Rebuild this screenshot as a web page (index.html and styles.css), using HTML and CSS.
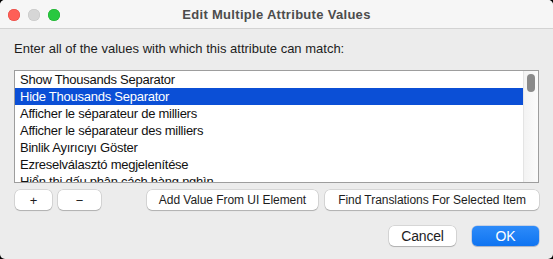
FILE: index.html
```html
<!DOCTYPE html>
<html>
<head>
<meta charset="utf-8">
<link rel="stylesheet" href="styles.css">
</head>
<body>
<div class="window">
  <div class="titlebar">
    <div class="lights">
      <span class="light red"></span>
      <span class="light gray"></span>
      <span class="light green"></span>
    </div>
    <div class="title">Edit Multiple Attribute Values</div>
    <div class="spacer"></div>
  </div>
  <div class="content">
    <div class="label">Enter all of the values with which this attribute can match:</div>
    <div class="listbox">
      <div class="rows">
        <div class="row">Show Thousands Separator</div>
        <div class="row selected">Hide Thousands Separator</div>
        <div class="row">Afficher le séparateur de milliers</div>
        <div class="row">Afficher le séparateur des milliers</div>
        <div class="row">Binlik Ayırıcıyı Göster</div>
        <div class="row">Ezreselválasztó megjelenítése</div>
        <div class="row">Hiển thị dấu phân cách hàng nghìn</div>
      </div>
      <div class="scrollbar"><div class="thumb"></div></div>
    </div>
    <div class="toolrow">
      <div class="group">
        <button class="btn plus">+</button>
        <button class="btn minus">−</button>
      </div>
      <div class="group wide">
        <button class="btn addval">Add Value From UI Element</button>
        <button class="btn findtr">Find Translations For Selected Item</button>
      </div>
    </div>
    <div class="actions">
      <button class="btn action">Cancel</button>
      <button class="btn action ok">OK</button>
    </div>
  </div>
</div>
</body>
</html>
```
FILE: styles.css
```css
* { box-sizing: border-box; }
html, body { margin: 0; padding: 0; background: #000; }
body { font-family: "Liberation Sans", Arial, sans-serif; font-size: 13px; color: #1d1d1d; }
.window {
  width: 553px; height: 259px;
  background: #ececec;
  border-radius: 5px;
  overflow: hidden;
}
.titlebar {
  height: 29px;
  background: #f6f6f6;
  border-bottom: 1px solid #d3d3d3;
  display: grid;
  grid-template-columns: 1fr auto 1fr;
  align-items: center;
}
.lights { display: flex; gap: 8px; padding-left: 8px; padding-top: 1px; }
.light { width: 12px; height: 12px; border-radius: 50%; display: block; }
.red { background: #fe5f57; box-shadow: inset 0 0 0 0.5px #e2463f; }
.gray { background: #d6d6d6; box-shadow: inset 0 0 0 0.5px #c4c4c4; }
.green { background: #28c840; box-shadow: inset 0 0 0 0.5px #1aab29; }
.title { font-weight: bold; color: #4c4c4c; letter-spacing: 0.3px; padding-top: 1px; }
.content { padding: 12px 14px 0 14px; }
.label { height: 16px; line-height: 16px; letter-spacing: 0; color: #1d1d1d; }
.listbox {
  margin-top: 13px;
  height: 113px;
  border: 1px solid #9d9d9d;
  background: #fff;
  display: flex;
}
.rows { flex: 1; overflow: hidden; }
.row {
  height: 17px; line-height: 17px;
  padding-left: 5px;
  letter-spacing: -0.25px;
  white-space: nowrap;
  color: #111;
}
.row.selected { background: #0b4fd6; color: #fff; }
.scrollbar {
  width: 15px;
  background: linear-gradient(to right, #f3f3f3, #fbfbfb);
  border-left: 1px solid #e4e4e4;
  padding: 3px 0 0 3px;
}
.thumb { width: 8px; height: 18px; border-radius: 4px; background: #8a8a8a; }
.toolrow {
  margin-top: 7px;
  display: flex;
  justify-content: space-between;
  padding-left: 1px;
}
.group { display: flex; gap: 6px; }
.group.wide { gap: 7px; }
.btn {
  font-family: inherit; font-size: 12px; color: #1d1d1d;
  height: 20px;
  padding: 0;
  border: none;
  border-radius: 5px;
  background: #fff;
  box-shadow: 0 0 0 0.5px rgba(0,0,0,0.18), 0 1px 1px rgba(0,0,0,0.18);
  letter-spacing: -0.05px;
  display: flex; align-items: center; justify-content: center;
}
.plus, .minus { font-size: 13px; }
.plus { width: 37px; }
.minus { width: 43px; }
.addval { width: 171px; }
.findtr { width: 214px; }
.actions {
  margin-top: 16px;
  display: flex; justify-content: flex-end; gap: 16px;
}
.action { width: 67px; font-size: 14px; letter-spacing: -0.2px; }
.ok {
  background: linear-gradient(#2d8bf9, #0f74f1);
  color: #fff;
  box-shadow: 0 0 0 0.5px rgba(0,60,180,0.3), 0 1px 1px rgba(0,0,0,0.15);
}
```
